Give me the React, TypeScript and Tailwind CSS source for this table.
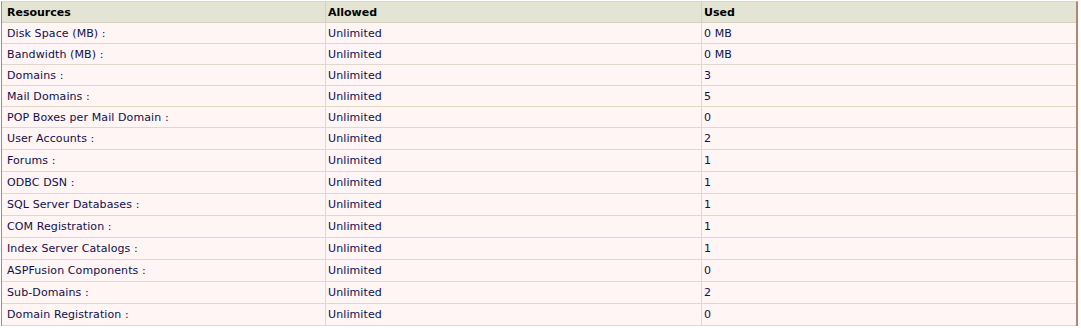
import React from 'react';

const ROWS = [
  { name: 'Disk Space (MB) :', allowed: 'Unlimited', used: '0 MB', h: 'h-[21px]' },
  { name: 'Bandwidth (MB) :', allowed: 'Unlimited', used: '0 MB', h: 'h-[21px]' },
  { name: 'Domains :', allowed: 'Unlimited', used: '3', h: 'h-[21px]' },
  { name: 'Mail Domains :', allowed: 'Unlimited', used: '5', h: 'h-[21px]' },
  { name: 'POP Boxes per Mail Domain :', allowed: 'Unlimited', used: '0', h: 'h-[21px]' },
  { name: 'User Accounts :', allowed: 'Unlimited', used: '2', h: 'h-[22px]' },
  { name: 'Forums :', allowed: 'Unlimited', used: '1', h: 'h-[22px]' },
  { name: 'ODBC DSN :', allowed: 'Unlimited', used: '1', h: 'h-[22px]' },
  { name: 'SQL Server Databases :', allowed: 'Unlimited', used: '1', h: 'h-[22px]' },
  { name: 'COM Registration :', allowed: 'Unlimited', used: '1', h: 'h-[22px]' },
  { name: 'Index Server Catalogs :', allowed: 'Unlimited', used: '1', h: 'h-[22px]' },
  { name: 'ASPFusion Components :', allowed: 'Unlimited', used: '0', h: 'h-[22px]' },
  { name: 'Sub-Domains :', allowed: 'Unlimited', used: '2', h: 'h-[22px]' },
  { name: 'Domain Registration :', allowed: 'Unlimited', used: '0', h: 'h-[22px]' },
];

const grid = 'grid grid-cols-[324px_376px_374px]';

export default function App() {
  return (
    <div className="bg-white w-[1081px] h-[328px] overflow-hidden font-['DejaVu_Sans',Verdana,sans-serif] text-[11px]">
      <div className="ml-px mt-px w-[1077px] border-l border-r-2 border-[#b58476] border-t border-t-[#dcd6c6]">
        <div className={`${grid} h-[21px] bg-[#e4e4d4] border-b border-[#d9d0c0] font-bold text-black`}>
          <div className="flex items-center pt-[2px] pl-[5px] border-r border-[#d9d0c0]">Resources</div>
          <div className="flex items-center pt-[2px] pl-[2px] border-r border-[#d9d0c0]">Allowed</div>
          <div className="flex items-center pt-[2px] pl-[2px]">Used</div>
        </div>
        {ROWS.map((r) => (
          <div key={r.name} className={`${grid} ${r.h} bg-[#fff5f4] border-b border-[#e2d7cb] text-[#10104a]`}>
            <div className="flex items-center pt-[2px] pl-[5px] border-r border-[#e2d7cb] tracking-[0.1px]">{r.name}</div>
            <div className="flex items-center pt-[2px] pl-[2px] border-r border-[#e2d7cb] tracking-[0.1px]">{r.allowed}</div>
            <div className="flex items-center pt-[2px] pl-[2px] tracking-[0.1px]">{r.used}</div>
          </div>
        ))}
      </div>
    </div>
  );
}
